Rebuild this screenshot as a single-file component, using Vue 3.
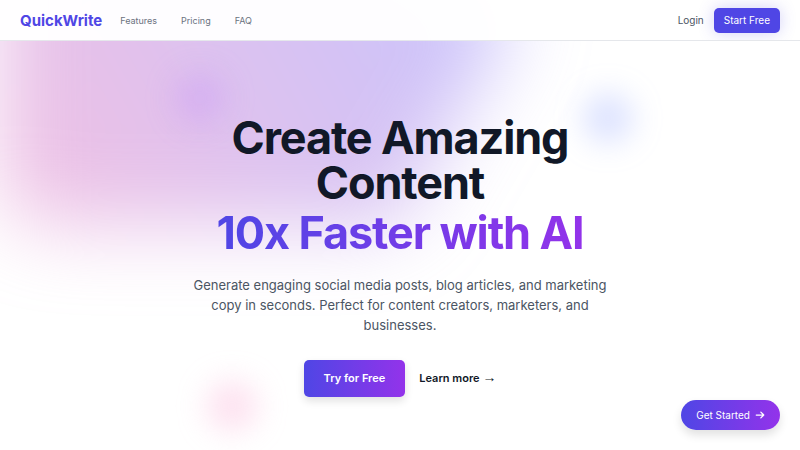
<script setup>
const links = [
  { label: 'Features', href: '#features' },
  { label: 'Pricing', href: '#pricing' },
  { label: 'FAQ', href: '#faq' },
]
</script>

<template>
  <div class="page">
    <header class="topbar">
      <a class="logo" href="#">QuickWrite</a>
      <nav class="links" aria-label="Main">
        <a v-for="link in links" :key="link.label" :href="link.href">{{ link.label }}</a>
      </nav>
      <div class="account">
        <a class="login" href="#login">Login</a>
        <button class="start" type="button">Start Free</button>
      </div>
    </header>

    <main class="hero">
      <div class="backdrop" aria-hidden="true"><div class="backdrop-shape"></div></div>
      <span class="orb orb-purple" aria-hidden="true"></span>
      <span class="orb orb-blue" aria-hidden="true"></span>
      <span class="orb orb-pink" aria-hidden="true"></span>

      <div class="content">
        <h1>
          Create Amazing Content
          <span class="accent">10x Faster with AI</span>
        </h1>
        <p>
          Generate engaging social media posts, blog articles, and marketing copy in
          seconds. Perfect for content creators, marketers, and businesses.
        </p>
        <div class="actions">
          <button class="try" type="button">Try for Free</button>
          <a class="more" href="#features">Learn more <span class="arrow" aria-hidden="true">→</span></a>
        </div>
      </div>
    </main>

    <button class="floating" type="button">
      Get Started
      <svg viewBox="0 0 24 24" aria-hidden="true">
        <path d="M14 5l7 7m0 0l-7 7m7-7H3" />
      </svg>
    </button>
  </div>
</template>

<style>
body {
  margin: 0;
  background: #fff;
}
</style>

<style scoped>
.page {
  position: relative;
  min-height: 100vh;
  display: flex;
  flex-direction: column;
  overflow: hidden;
  font-family: Inter, "Liberation Sans", sans-serif;
  color: #111827;
}

a {
  color: inherit;
  text-decoration: none;
}

button {
  border: 0;
  font-family: inherit;
  color: #fff;
  cursor: pointer;
}

.topbar {
  position: relative;
  z-index: 2;
  display: flex;
  align-items: center;
  height: 40px;
  padding: 0 20px;
  overflow: hidden;
  background: rgba(255, 255, 255, 0.97);
  border-bottom: 1px solid #e5e7eb;
}

.logo {
  font-size: 15px;
  font-weight: 700;
  color: #4f46e5;
}

.links {
  display: flex;
  gap: 24px;
  margin-left: 18px;
  font-size: 9px;
  color: #6b7280;
}

.account {
  display: flex;
  align-items: center;
  gap: 10px;
  margin-left: auto;
  font-size: 10px;
}

.login {
  color: #4b5563;
}

.start {
  padding: 5px 10px;
  border-radius: 5px;
  background: #4f46e5;
  font-size: 10px;
  line-height: 15px;
  box-shadow: 0 0 16px rgba(79, 70, 229, 0.25);
}

.hero {
  position: relative;
  flex: 1;
}

.backdrop {
  position: absolute;
  top: -240px;
  left: 0;
  right: 0;
  overflow: hidden;
  filter: blur(40px);
}

.backdrop-shape {
  width: 722px;
  aspect-ratio: 1155 / 678;
  margin-left: calc(50% - 300px);
  transform: translateX(-50%) rotate(30deg);
  background: linear-gradient(to top right, #ff80b5, #9089fc);
  opacity: 0.5;
}

.orb {
  position: absolute;
  width: 50px;
  height: 50px;
  border-radius: 50%;
  filter: blur(15px);
}

.orb-purple {
  top: 32px;
  left: calc(50% - 225px);
  background: rgba(192, 132, 252, 0.28);
}

.orb-blue {
  top: 52px;
  left: calc(50% + 183px);
  background: rgba(129, 150, 255, 0.28);
}

.orb-pink {
  top: 340px;
  left: calc(50% - 193px);
  background: rgba(249, 168, 212, 0.36);
}

.content {
  position: relative;
  max-width: 420px;
  margin: 0 auto;
  padding: 74px 0 52px;
  text-align: center;
}

h1 {
  margin: 0;
  font-size: 45px;
  line-height: 45px;
  font-weight: 700;
  letter-spacing: -0.025em;
}

.accent {
  display: block;
  width: fit-content;
  margin: 0 auto;
  line-height: 56px;
  background: linear-gradient(to right, #4f46e5, #9333ea);
  background-clip: text;
  color: transparent;
}

p {
  margin: 14px 0 0;
  font-size: 13px;
  line-height: 20px;
  color: #4b5563;
}

.actions {
  display: flex;
  justify-content: center;
  align-items: center;
  gap: 14px;
  margin-top: 25px;
  font-size: 11px;
  line-height: 17px;
  font-weight: 600;
}

.arrow {
  font-family: "Liberation Sans", sans-serif;
  font-size: 14px;
  line-height: 1;
}

.try {
  padding: 10px 20px;
  border-radius: 5px;
  background: linear-gradient(to right, #4f46e5, #9333ea);
  font-size: 11px;
  font-weight: 600;
  line-height: 17px;
  box-shadow: 0 4px 8px rgba(0, 0, 0, 0.12);
}

.floating {
  position: absolute;
  z-index: 2;
  right: 20px;
  bottom: 20px;
  display: flex;
  align-items: center;
  gap: 5px;
  padding: 8px 15px;
  border-radius: 20px;
  background: linear-gradient(to right, #4f46e5, #9333ea);
  font-size: 10px;
  line-height: 14px;
  box-shadow: 0 5px 10px rgba(0, 0, 0, 0.12);
}

.floating svg {
  width: 10px;
  height: 10px;
  fill: none;
  stroke: currentColor;
  stroke-width: 3;
  stroke-linecap: round;
  stroke-linejoin: round;
}
</style>
